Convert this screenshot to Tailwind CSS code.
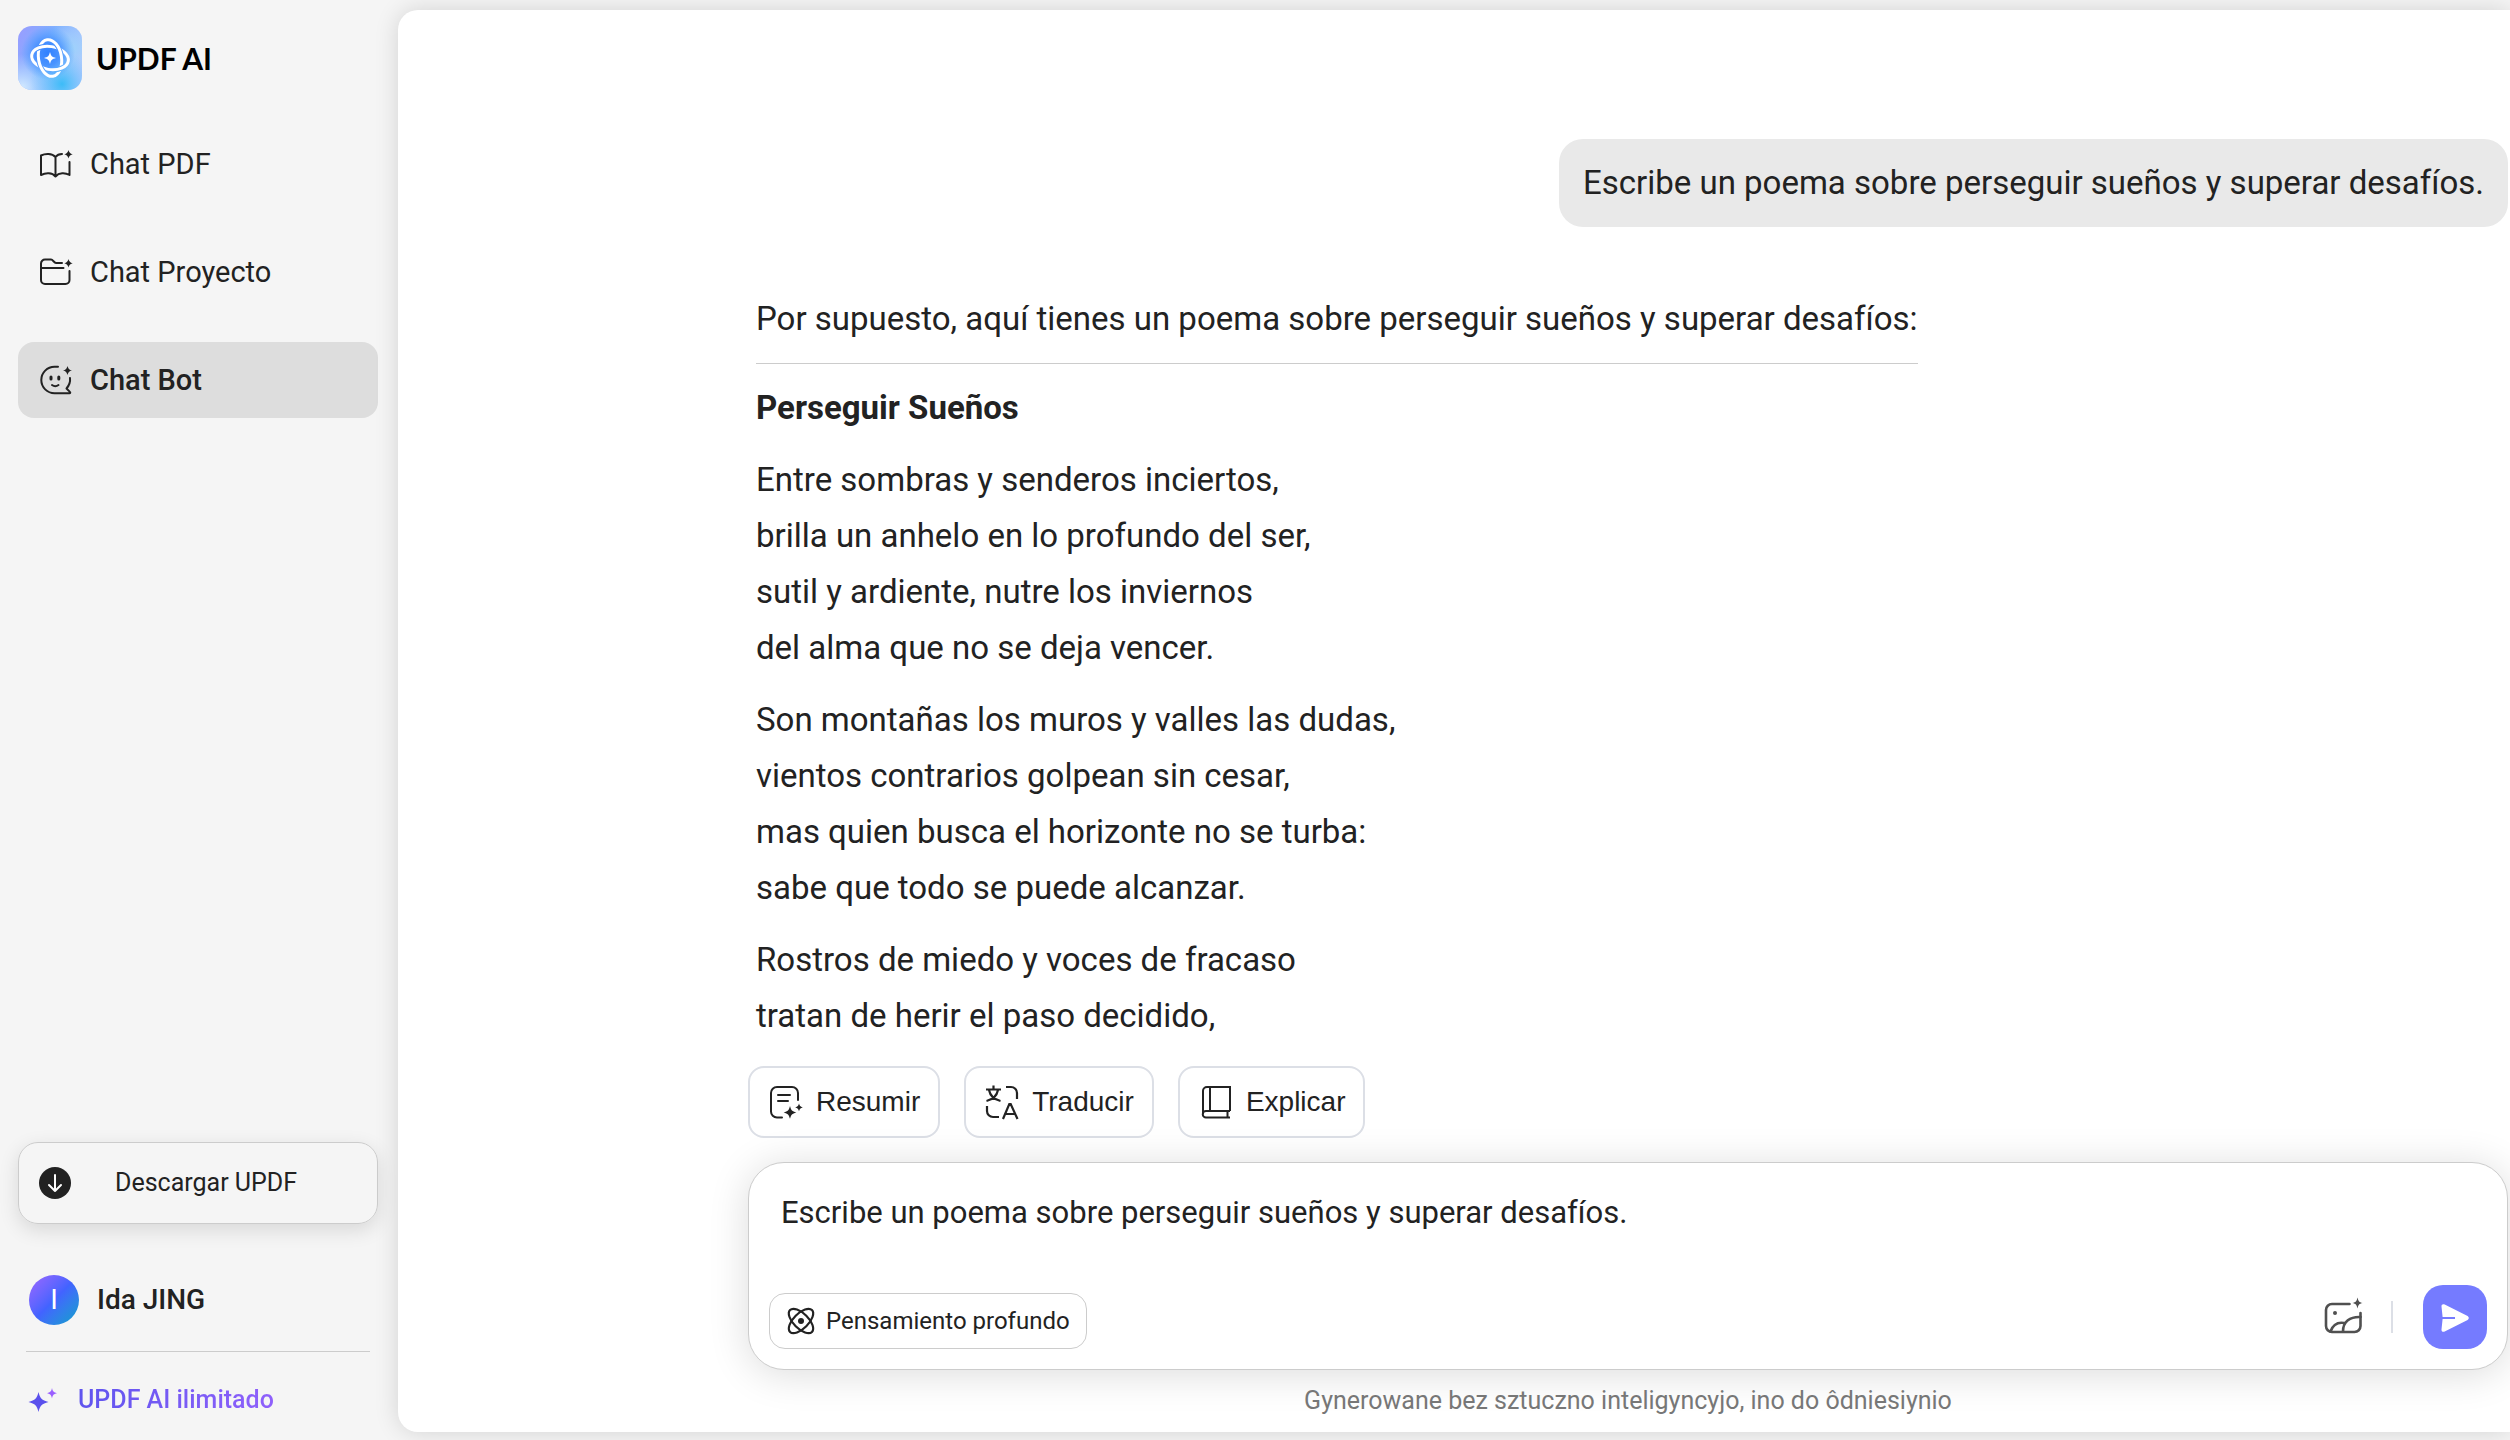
<!DOCTYPE html>
<html lang="es">
<head>
    <meta charset="UTF-8">
    <meta name="viewport" content="width=device-width, initial-scale=1.0">
    <title>UPDF AI</title>
    <script src="https://cdn.jsdelivr.net/npm/@tailwindcss/browser@4"></script>
</head>
<body class="bg-[#f5f5f5] text-[#222] font-['Roboto',sans-serif] flex min-h-screen overflow-x-hidden">

    <!-- Barra lateral -->
    <aside class="w-[398px] shrink-0 flex flex-col pl-[18px] pr-5 pt-[26px] pb-[22px]">
        <div class="flex items-center gap-3.5">
            <svg class="size-16" viewBox="0 0 64 64" fill="none">
                <defs>
                    <linearGradient id="base" x1="0" y1="0" x2="64" y2="30" gradientUnits="userSpaceOnUse"><stop stop-color="#9a9cff"/><stop offset=".5" stop-color="#7fb0ff"/><stop offset="1" stop-color="#b4c6ff"/></linearGradient>
                    <radialGradient id="core"><stop stop-color="#2f80ff"/><stop offset=".45" stop-color="#3f8cff" stop-opacity=".85"/><stop offset="1" stop-color="#4aa0ff" stop-opacity="0"/></radialGradient>
                    <radialGradient id="cyan"><stop stop-color="#3cbcf8"/><stop offset="1" stop-color="#6cc8fb" stop-opacity="0"/></radialGradient>
                    <radialGradient id="pale"><stop stop-color="#d4ebff"/><stop offset="1" stop-color="#c0dcff" stop-opacity="0"/></radialGradient>
                    <radialGradient id="sky"><stop stop-color="#9fd2fb"/><stop offset="1" stop-color="#9fd2fb" stop-opacity="0"/></radialGradient>
                    <clipPath id="tile"><rect width="64" height="64" rx="14"/></clipPath>
                    <clipPath id="tlbr"><path d="M0 0h32v32H0zM32 32h32v32H32z"/></clipPath>
                    <clipPath id="trbl"><path d="M32 0h32v32H32zM0 32h32v32H0z"/></clipPath>
                    <mask id="mv"><path fill="#fff" d="M0 0h64v64H0z"/><g clip-path="url(#tlbr)"><ellipse cx="32" cy="32" rx="18.500" ry="11.500" transform="rotate(9 32 32)" stroke="#000" stroke-width="5"/></g></mask>
                    <mask id="mh"><path fill="#fff" d="M0 0h64v64H0z"/><g clip-path="url(#trbl)"><ellipse cx="32" cy="32" rx="11.500" ry="18.500" transform="rotate(-9 32 32)" stroke="#000" stroke-width="5"/></g></mask>
                </defs>
                <g clip-path="url(#tile)">
                    <path fill="url(#base)" d="M0 0h64v64H0z"/>
                    <circle cx="54" cy="22" r="28" fill="url(#sky)"/>
                    <circle cx="4" cy="62" r="34" fill="url(#pale)"/>
                    <circle cx="44" cy="58" r="32" fill="url(#cyan)"/>
                    <circle cx="30" cy="27" r="27" fill="url(#core)"/>
                </g>
                <g stroke="#fff" stroke-width="3">
                    <g mask="url(#mh)"><ellipse cx="32" cy="32" rx="18.500" ry="11.500" transform="rotate(9 32 32)"/></g>
                    <g mask="url(#mv)"><ellipse cx="32" cy="32" rx="11.500" ry="18.500" transform="rotate(-9 32 32)"/></g>
                </g>
                <path fill="#fff" d="M32 26c1 4 2 5 6 6c-4 1-5 2-6 6c-1-4-2-5-6-6c4-1 5-2 6-6z"/>
            </svg>
            <span class="text-[30px] leading-10 font-bold font-['Lato',sans-serif] text-black">UPDF AI</span>
        </div>

        <nav class="mt-9 flex flex-col gap-8 text-[29px] leading-10">
            <a href="#" class="flex items-center gap-[18px] h-[76px] rounded-2xl pl-[22px]">
                <svg class="w-8 h-7 shrink-0 overflow-visible" viewBox="0 0 32 28" fill="none" stroke="#222" stroke-width="2" stroke-linecap="round" stroke-linejoin="round">
                    <path d="M15.500 7v19.500M15.500 7C12 3 5 3.500 1 5.500V25c5-2.500 11-2.500 14.500 1.500C19 22.500 25 22.500 29.500 25V12M15.500 7C17 5 19 4 22 4"/>
                    <path fill="#222" stroke="none" d="M28.500 0c.9 2.800 1.500 3.400 4.300 4.300c-2.800.9-3.400 1.500-4.300 4.300c-.9-2.800-1.500-3.400-4.300-4.300c2.800-.9 3.400-1.500 4.300-4.300z"/>
                </svg>
                Chat PDF
            </a>
            <a href="#" class="flex items-center gap-[18px] h-[76px] rounded-2xl pl-[22px]">
                <svg class="w-8 h-7 shrink-0 overflow-visible" viewBox="0 0 32 28" fill="none" stroke="#222" stroke-width="2" stroke-linecap="round" stroke-linejoin="round">
                    <path d="M22 5h-6c-2 0-3-3.500-5-3.500H5a4 4 0 0 0-4 4V22a4 4 0 0 0 4 4h20.500a4 4 0 0 0 4-4V13M1 10h22.500"/>
                    <path fill="#222" stroke="none" d="M28.500 1c.9 2.800 1.500 3.400 4.300 4.300c-2.800.9-3.400 1.500-4.300 4.300c-.9-2.800-1.500-3.400-4.300-4.300c2.800-.9 3.400-1.500 4.300-4.300z"/>
                </svg>
                Chat Proyecto
            </a>
            <a href="#" class="flex items-center gap-[18px] h-[76px] rounded-2xl pl-[22px] bg-[#ddd] font-medium">
                <svg class="w-8 h-7 shrink-0 overflow-visible" viewBox="0 0 32 28" fill="none" stroke="#222" stroke-width="2" stroke-linecap="round" stroke-linejoin="round">
                    <path d="M18 .8H14.500A13.200 13.200 0 0 0 14.500 27.200H29.500c.8 0 1-.8.4-1.300L26.500 22.500C29.500 19 30.500 16 30 12M12 19c2 1.500 4.500 1.500 6.500 0"/>
                    <path stroke-width="3" d="M11 11v2M18.800 11v2"/>
                    <path fill="#222" stroke="none" d="M27.500 0c.9 3 1.600 3.700 4.500 4.500c-2.900.8-3.600 1.500-4.500 4.500c-.9-3-1.600-3.700-4.500-4.500c2.900-.8 3.600-1.500 4.500-4.500z"/>
                </svg>
                Chat Bot
            </a>
        </nav>

        <div class="mt-auto">
            <button class="w-full h-[82px] flex items-center gap-[44px] pl-5 border border-[#ccc] rounded-[20px] shadow-[0_6px_20px_rgba(0,0,0,0.12)] text-[25px] leading-9">
                <svg class="size-8 shrink-0" viewBox="0 0 32 32" fill="none" stroke="#fff" stroke-width="2" stroke-linecap="round" stroke-linejoin="round">
                    <circle cx="16" cy="16" r="16" fill="#222" stroke="none"/>
                    <path d="M16 8v16M10 18l6 6 6-6"/>
                </svg>
                Descargar UPDF
            </button>
            <div class="mt-[51px] flex items-center gap-[18px] pl-[11px]">
                <div class="size-[50px] rounded-full bg-linear-135 from-[#9b66ff] via-[#4263ff] to-[#00a0c8] text-white text-[28px] flex items-center justify-center">I</div>
                <span class="text-[28px] leading-10 font-medium">Ida JING</span>
            </div>
            <hr class="mt-[26px] mx-2 border-[#ccc]">
            <a href="#" class="mt-[30px] flex items-center gap-5 pl-[10px] text-[25px] leading-9 font-medium">
                <svg class="w-[30px] h-6 shrink-0" viewBox="0 0 30 24">
                    <path fill="#5a50ec" d="M10.500 4c1.600 6.600 3.200 8.200 10 10c-6.800 1.800-8.400 3.400-10 10c-1.600-6.600-3.200-8.200-10-10c6.800-1.800 8.400-3.400 10-10z"/>
                    <path fill="#9a5fff" d="M24 0c.8 3.500 1.600 4.300 5 5.200c-3.400.9-4.200 1.700-5 5.200c-.8-3.500-1.600-4.300-5-5.200c3.400-.9 4.200-1.700 5-5.200z"/>
                </svg>
                <span class="bg-linear-to-r from-[#5f54ee] to-[#8f60fb] bg-clip-text text-transparent">UPDF AI ilimitado</span>
            </a>
        </div>
    </aside>

    <!-- Conversación -->
    <main class="flex-1 min-w-0 flex flex-col mt-[10px] mb-2 bg-white rounded-l-[20px] shadow-[0_0_24px_rgba(0,0,0,0.14)] pl-[350px] pr-0.5">
        <div class="flex-1 pt-[129px] text-[33px] leading-14">
            <div class="flex justify-end">
                <p class="bg-[#e9e9e9] rounded-3xl px-6 py-4">Escribe un poema sobre perseguir sueños y superar desafíos.</p>
            </div>
            <article class="mt-16 pl-2 w-fit">
                <p>Por supuesto, aquí tienes un poema sobre perseguir sueños y superar desafíos:</p>
                <hr class="my-4 border-[#ccc]">
                <h3 class="font-bold">Perseguir Sueños</h3>
                <p class="mt-4">Entre sombras y senderos inciertos,<br>
                brilla un anhelo en lo profundo del ser,<br>
                sutil y ardiente, nutre los inviernos<br>
                del alma que no se deja vencer.</p>
                <p class="mt-4">Son montañas los muros y valles las dudas,<br>
                vientos contrarios golpean sin cesar,<br>
                mas quien busca el horizonte no se turba:<br>
                sabe que todo se puede alcanzar.</p>
                <p class="mt-4">Rostros de miedo y voces de fracaso<br>
                tratan de herir el paso decidido,</p>
            </article>
        </div>

        <!-- Acciones rápidas -->
        <div class="flex gap-6 text-[28px] leading-9 font-['Liberation_Sans',sans-serif]">
            <button class="h-[72px] flex items-center gap-3 px-[18px] border-2 border-[#dcdfe6] rounded-2xl">
                <svg class="size-9" viewBox="0 0 36 36" fill="none" stroke="#222" stroke-width="2" stroke-linecap="round">
                    <path d="M14 33.500H9a6 6 0 0 1-6-6V9A6 6 0 0 1 9 3h15a6 6 0 0 1 6 6v7M10 11h12M10 17h10"/>
                    <path fill="#222" stroke="none" d="M22 22c1.200 4.400 2 5.200 6.300 6.400c-4.300 1.200-5.100 2-6.300 6.400c-1.200-4.400-2-5.200-6.300-6.400c4.300-1.200 5.100-2 6.300-6.400zM31 19.500c.7 2.600 1.200 3.100 3.800 3.900c-2.600.7-3.100 1.200-3.800 3.800c-.7-2.600-1.200-3.100-3.800-3.800c2.600-.8 3.100-1.300 3.800-3.900z"/>
                </svg>
                Resumir
            </button>
            <button class="h-[72px] flex items-center gap-3 px-[18px] border-2 border-[#dcdfe6] rounded-2xl">
                <svg class="size-9" viewBox="0 0 36 36" fill="none" stroke="#222" stroke-width="2.200">
                    <path d="M2 5.500h15M9.500 1.500v4M5 6c1 5 5 9.500 11.500 11M14 6c-1 5-5 9.500-11.500 11M22 3h5a6 6 0 0 1 6 6v6M3 22v5a6 6 0 0 0 6 6h6M19 35l6.300-15h1.400L33.500 35M21 30h10"/>
                </svg>
                Traducir
            </button>
            <button class="h-[72px] flex items-center gap-3 px-[18px] border-2 border-[#dcdfe6] rounded-2xl">
                <svg class="size-9" viewBox="0 0 36 36" fill="none" stroke="#222" stroke-width="2">
                    <path d="M32 27V3H9a4 4 0 0 0-4 4v23M12 3v24M32 27H8a3 3 0 0 0 0 6.500h24M29.500 27v6.500"/>
                </svg>
                Explicar
            </button>
        </div>

        <!-- Caja de mensaje -->
        <form class="mt-6 h-[208px] flex flex-col justify-between border border-[#ccc] rounded-[36px] p-5 bg-white shadow-[0_4px_40px_rgba(0,0,0,0.14)]">
            <label for="mensaje" class="sr-only">Mensaje</label>
            <textarea id="mensaje" class="w-full h-20 px-3 py-1.5 resize-none outline-none overflow-hidden text-[31px] leading-12">Escribe un poema sobre perseguir sueños y superar desafíos.</textarea>
            <div class="flex items-center">
                <button type="button" class="self-end h-14 flex items-center gap-2.5 px-4 border border-[#ccc] rounded-2xl text-[24px] leading-8">
                    <svg class="size-[30px]" viewBox="0 0 30 30" fill="none" stroke="#222" stroke-width="2.200">
                        <ellipse cx="15" cy="15" rx="15.500" ry="7.500" transform="rotate(45 15 15)"/>
                        <ellipse cx="15" cy="15" rx="15.500" ry="7.500" transform="rotate(-45 15 15)"/>
                        <circle cx="15" cy="15" r="3" fill="#222" stroke="none"/>
                    </svg>
                    Pensamiento profundo
                </button>
                <button type="button" aria-label="Imagen" class="ml-auto">
                    <svg class="size-10" viewBox="0 0 40 40" fill="none" stroke="#505050" stroke-width="2.600" stroke-linecap="round" stroke-linejoin="round">
                        <path d="M26.500 7H9a6 6 0 0 0-6 6v16a6 6 0 0 0 6 6h22.500a6 6 0 0 0 6-6V16"/>
                        <path d="M7.500 34.500c2.500-7 7-9.500 13.500-8.500M20 34.500c0-10 7-15 17.500-14.500"/>
                        <circle cx="12" cy="16" r="2" fill="#505050" stroke="none"/>
                        <path fill="#505050" stroke="none" d="M34.500.5c1 4 1.700 4.700 5 5.500c-3.300.8-4 1.500-5 5.500c-1-4-1.700-4.700-5-5.500c3.300-.8 4-1.500 5-5.500z"/>
                    </svg>
                </button>
                <span class="ml-7 mr-[30px] w-0.5 h-8 bg-[#dcdfe6]"></span>
                <button type="submit" aria-label="Enviar" class="size-16 rounded-[20px] bg-[#757bff]">
                    <svg class="size-16" viewBox="0 0 64 64">
                        <path fill="#fff" d="M18.500 21.500c-.2-2 1.500-2.900 3.200-2L44.600 31c1.600.9 1.600 3.100 0 4L21.700 46.500c-1.700.9-3.400 0-3.200-2L19.600 34H32v-2H19.600z"/>
                    </svg>
                </button>
            </div>
        </form>
        <p class="h-[62px] flex items-center justify-center text-[25px] leading-8 text-[#777]">Gynerowane bez sztuczno inteligyncyjo, ino do ôdniesiynio</p>
    </main>

</body>
</html>
